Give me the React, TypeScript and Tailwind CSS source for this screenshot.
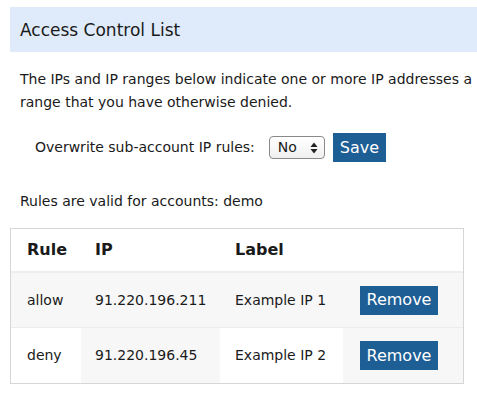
const rules = [
  { rule: 'allow', ip: '91.220.196.211', label: 'Example IP 1' },
  { rule: 'deny', ip: '91.220.196.45', label: 'Example IP 2' },
]

function SelectArrows() {
  return (
    <svg width="8" height="12" viewBox="0 0 8 12" className="ml-auto">
      <path d="M4 0.5 L7.5 5 L0.5 5 Z" fill="#222" />
      <path d="M4 11.5 L7.5 7 L0.5 7 Z" fill="#222" />
    </svg>
  )
}

export default function App() {
  return (
    <div className="w-[477px] h-[395px] overflow-hidden bg-white text-[#1a1a1a] font-['DejaVu_Sans',sans-serif]">
      <div className="w-[600px] pt-[7px] pl-[10px]">
        {/* header */}
        <div className="h-[45px] bg-[#dfebfb] pl-[10px] pt-[3px] flex items-center text-[17px]">
          Access Control List
        </div>

        <p className="mt-[16px] pl-[10px] text-[14px] leading-[23px] whitespace-nowrap">
          The IPs and IP ranges below indicate one or more IP addresses a
          <br />
          range that you have otherwise denied.
        </p>

        {/* overwrite */}
        <div className="mt-[19px] pl-[25px] flex items-center text-[14px] h-[29px]">
          <span>Overwrite sub-account IP rules:</span>
          <div className="ml-[14px] w-[56px] h-[23px] border border-[#8a8a8a] rounded-[4px] bg-gradient-to-b from-white to-[#f0f0f0] flex items-center pl-[8px] pr-[6px] text-[14px]">
            <span>No</span>
            <SelectArrows />
          </div>
          <button className="ml-[8px] h-[29px] px-[7px] bg-[#1d5e95] text-white text-[16px]">Save</button>
        </div>

        <p className="mt-[28px] pl-[10px] text-[14px] leading-[23px]">Rules are valid for accounts: demo</p>

        {/* table */}
        <div className="mt-[15px] w-[454px] border border-[#d6d6d6] text-[14px]">
          <div className="flex h-[44px] items-center font-bold text-[16px] border-b-2 border-[#ededed]">
            <div className="w-[70px] pl-[16px]">Rule</div>
            <div className="w-[139px] pl-[14px]">IP</div>
            <div className="w-[123px] pl-[15px]">Label</div>
            <div className="flex-1" />
          </div>
          {rules.map((r, i) => (
            <div
              key={r.ip}
              className={`flex h-[55px] items-stretch ${i === 0 ? 'bg-[#f7f7f7] border-b border-[#ececec]' : ''}`}
            >
              <div className="w-[70px] pl-[16px] flex items-center">{r.rule}</div>
              <div className={`w-[139px] pl-[14px] flex items-center ${i === 1 ? 'bg-[#f7f7f7]' : ''}`}>{r.ip}</div>
              <div className="w-[123px] pl-[15px] flex items-center">{r.label}</div>
              <div className={`flex-1 pl-[17px] flex items-center ${i === 1 ? 'bg-[#f7f7f7]' : ''}`}>
                <button className="h-[29px] w-[78px] bg-[#1d5e95] text-white text-[16px]">Remove</button>
              </div>
            </div>
          ))}
        </div>
      </div>
    </div>
  )
}
